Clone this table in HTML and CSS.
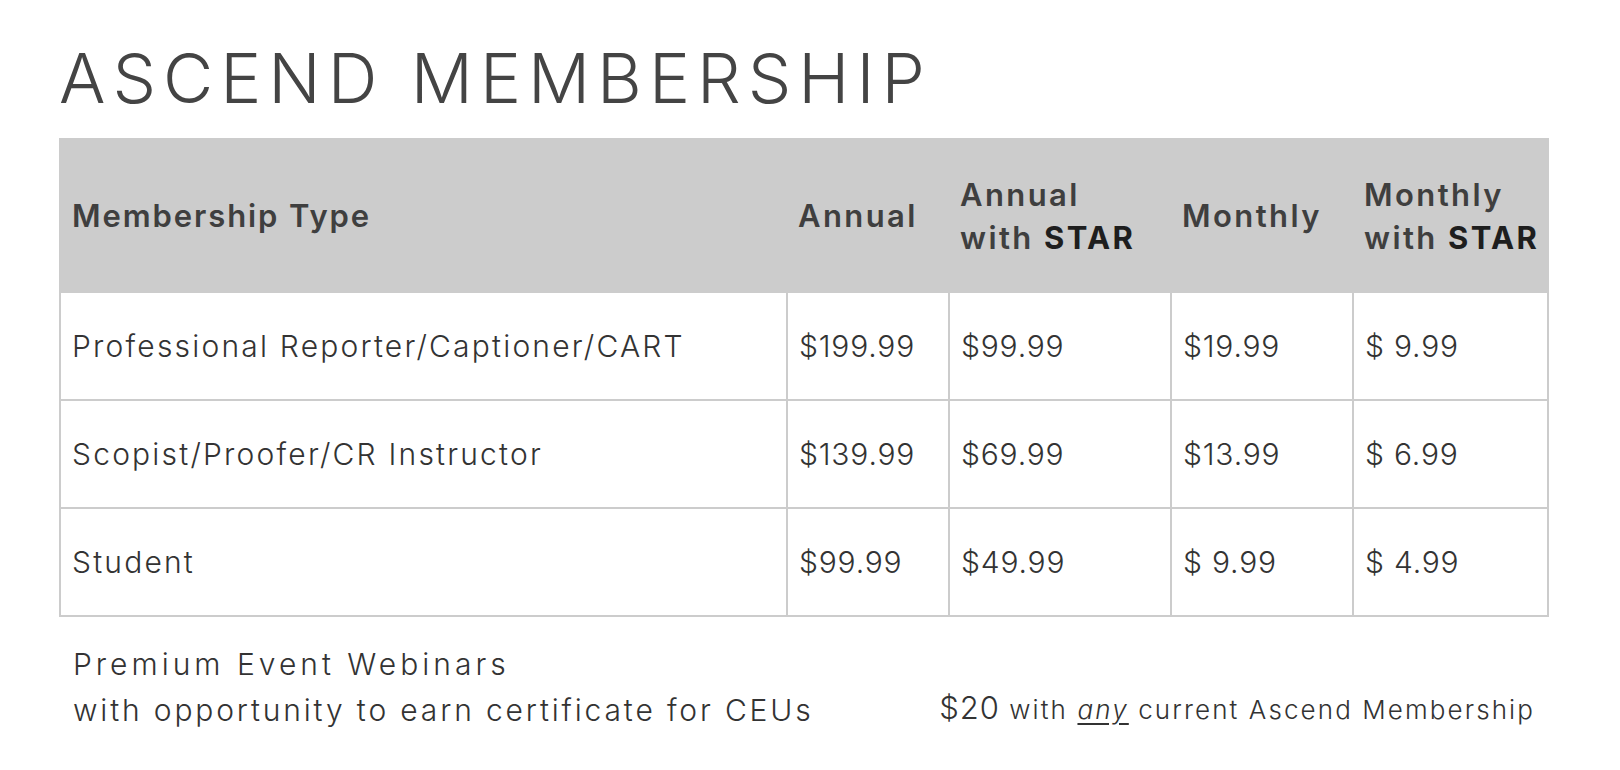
FILE: index.html
```html
<!DOCTYPE html>
<html lang="en">
<head>
<meta charset="utf-8">
<title>Ascend Membership</title>
<link rel="stylesheet" href="styles.css">
</head>
<body>
<main class="page">
  <h1 class="title">ASCEND MEMBERSHIP</h1>
  <table class="pricing">
    <colgroup>
      <col class="c-type">
      <col class="c-annual">
      <col class="c-annual-star">
      <col class="c-monthly">
      <col class="c-monthly-star">
    </colgroup>
    <thead>
      <tr>
        <th class="type-head">Membership Type</th>
        <th>Annual</th>
        <th>Annual<br>with <b>STAR</b></th>
        <th>Monthly</th>
        <th>Monthly<br>with <b>STAR</b></th>
      </tr>
    </thead>
    <tbody>
      <tr>
        <td class="type">Professional Reporter/Captioner/CART</td>
        <td>$199.99</td>
        <td>$99.99</td>
        <td>$19.99</td>
        <td>$ 9.99</td>
      </tr>
      <tr>
        <td class="type">Scopist/Proofer/CR Instructor</td>
        <td>$139.99</td>
        <td>$69.99</td>
        <td>$13.99</td>
        <td>$ 6.99</td>
      </tr>
      <tr>
        <td class="type">Student</td>
        <td>$99.99</td>
        <td>$49.99</td>
        <td>$ 9.99</td>
        <td>$ 4.99</td>
      </tr>
    </tbody>
  </table>
  <footer class="webinars">
    <div class="webinars-text">
      <p class="webinars-title">Premium Event Webinars</p>
      <p>with opportunity to earn certificate for CEUs</p>
    </div>
    <p class="webinars-price"><span class="amount">$20</span> with <u>any</u> current Ascend Membership</p>
  </footer>
</main>
</body>
</html>
```
FILE: styles.css
```css
* { box-sizing: border-box; }

html, body {
  margin: 0;
  padding: 0;
  background: #ffffff;
}

body {
  font-family: "Inter", "Lato", "Liberation Sans", sans-serif;
  color: #333333;
}

.page {
  width: 1620px;
  height: 770px;
  padding: 44px 0 0 59px;
}

.title {
  margin: 0 0 25px 0;
  font-size: 69px;
  line-height: 1;
  font-weight: 300;
  color: #444444;
  letter-spacing: 7px;
}

.pricing {
  width: 1488px;
  table-layout: fixed;
  border-collapse: collapse;
  border: 2px solid #cccccc;
}

.c-type { width: 727px; }
.c-annual { width: 162px; }
.c-annual-star { width: 222px; }
.c-monthly { width: 182px; }
.c-monthly-star { width: 195px; }

.pricing th {
  background: #cccccc;
  height: 153px;
  padding: 0 0 0 11px;
  text-align: left;
  font-size: 31px;
  line-height: 43px;
  font-weight: 600;
  color: #3f3f3f;
  letter-spacing: 2.4px;
  vertical-align: middle;
  white-space: nowrap;
}

.pricing th.type-head {
  letter-spacing: 1.9px;
}

.pricing th b {
  font-weight: 700;
  color: #1e1e1e;
}

.pricing td {
  height: 108px;
  padding: 0 0 0 11px;
  border: 2px solid #cccccc;
  font-size: 30px;
  font-weight: 300;
  color: #333333;
  letter-spacing: 0.8px;
  vertical-align: middle;
  white-space: nowrap;
}

.pricing td.type {
  letter-spacing: 2.2px;
}

.webinars {
  display: flex;
  justify-content: space-between;
  align-items: flex-end;
  width: 1488px;
  padding: 24px 12px 0 14px;
}

.webinars p {
  margin: 0;
}

.webinars-text {
  font-size: 30px;
  font-weight: 300;
  line-height: 46px;
  color: #333333;
  letter-spacing: 2.85px;
}

.webinars-text .webinars-title {
  letter-spacing: 4px;
}

.webinars-price {
  font-size: 26px;
  font-weight: 300;
  line-height: 46px;
  color: #333333;
  letter-spacing: 2.1px;
}

.webinars-price .amount {
  font-size: 31px;
  letter-spacing: 1px;
}

.webinars-price u {
  font-style: italic;
  text-underline-offset: 4px;
}
```
